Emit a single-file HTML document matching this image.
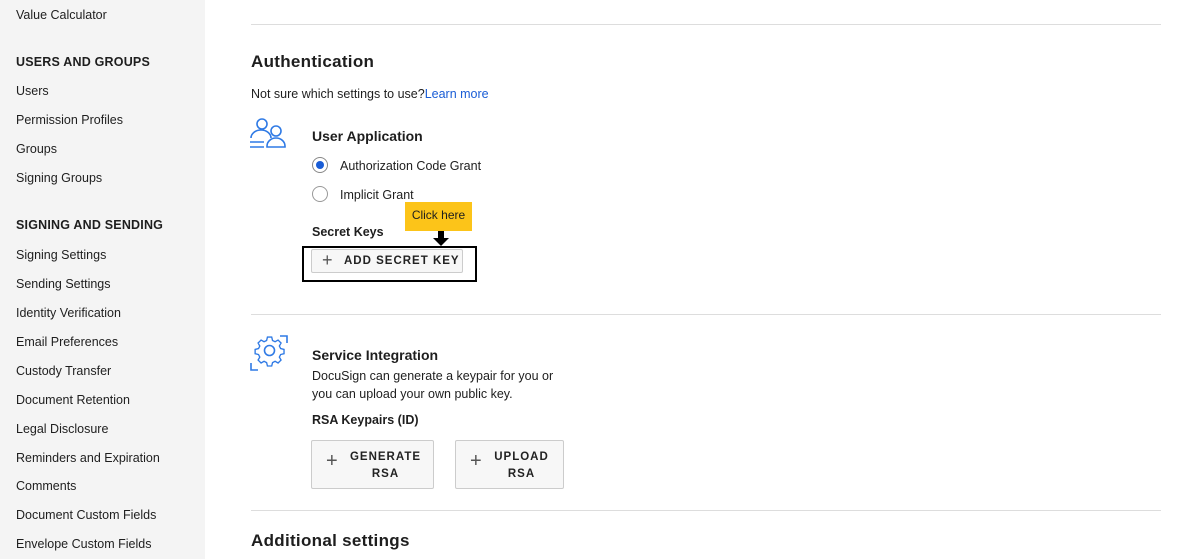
<!DOCTYPE html>
<html><head><style>
body{margin:0;width:1200px;height:559px;overflow:hidden;font-family:"Liberation Sans",sans-serif;color:#1e1e1e;background:#fff;position:relative}
.sb{position:absolute;left:0;top:0;width:205px;height:559px;background:#f4f4f4}
.t{position:absolute;white-space:nowrap}
.si{font-size:12.5px;left:16px}
.sh{font-size:12.5px;font-weight:bold;left:16px;letter-spacing:.2px}
.hr{position:absolute;left:251px;width:910px;height:1px;background:#ddd}
.btn{position:absolute;background:#f7f7f7;border:1px solid #ccc;border-radius:2px;font-size:11.5px;font-weight:bold;letter-spacing:1px;color:#222;box-sizing:border-box}
.pl{position:absolute;font-size:20px;font-weight:normal;color:#555;letter-spacing:0}
</style></head><body>
<div class="sb"></div>
<div class="t si" style="top:8px">Value Calculator</div>
<div class="t sh" style="top:55px">USERS AND GROUPS</div>
<div class="t si" style="top:84px">Users</div>
<div class="t si" style="top:113px">Permission Profiles</div>
<div class="t si" style="top:142px">Groups</div>
<div class="t si" style="top:171px">Signing Groups</div>
<div class="t sh" style="top:218px">SIGNING AND SENDING</div>
<div class="t si" style="top:248px">Signing Settings</div>
<div class="t si" style="top:277px">Sending Settings</div>
<div class="t si" style="top:306px">Identity Verification</div>
<div class="t si" style="top:335px">Email Preferences</div>
<div class="t si" style="top:364px">Custody Transfer</div>
<div class="t si" style="top:393px">Document Retention</div>
<div class="t si" style="top:422px">Legal Disclosure</div>
<div class="t si" style="top:451px">Reminders and Expiration</div>
<div class="t si" style="top:479px">Comments</div>
<div class="t si" style="top:508px">Document Custom Fields</div>
<div class="t si" style="top:537px">Envelope Custom Fields</div>

<div class="hr" style="top:24px"></div>
<div class="t" style="left:251px;top:52px;font-size:17px;font-weight:bold;letter-spacing:.3px">Authentication</div>
<div class="t" style="left:251px;top:87px;font-size:12.5px">Not sure which settings to use?<span style="color:#1a5dd6">Learn more</span></div>
<svg class="t" style="left:248px;top:117px" width="42" height="34" viewBox="0 0 42 34" fill="none" stroke="#2f7ae5" stroke-width="1.6">
<circle cx="14" cy="7" r="5"/><path d="M3 21a10 8 0 0 1 20 0"/><circle cx="28" cy="14" r="5"/><path d="M19 30v-1a9 8 0 0 1 18 0v1z"/><path d="M2 25h14M2 30h14"/></svg>
<div class="t" style="left:312px;top:128px;font-size:14px;font-weight:bold">User Application</div>
<div class="t" style="left:312px;top:157px;width:16px;height:16px;border:1px solid #888;border-radius:50%;box-sizing:border-box"><div style="position:absolute;left:3px;top:3px;width:8px;height:8px;border-radius:50%;background:#1a5dd6"></div></div>
<div class="t" style="left:340px;top:159px;font-size:12.5px">Authorization Code Grant</div>
<div class="t" style="left:312px;top:186px;width:16px;height:16px;border:1px solid #999;border-radius:50%;box-sizing:border-box"></div>
<div class="t" style="left:340px;top:188px;font-size:12.5px">Implicit Grant</div>
<div class="t" style="left:312px;top:225px;font-size:12.5px;font-weight:bold">Secret Keys</div>
<div class="t" style="left:405px;top:202px;width:67px;height:29px;background:#fcc419;font-size:12px;line-height:26px;text-align:center">Click here</div>
<div class="t" style="left:438px;top:231px;width:6px;height:7px;background:#000"></div>
<div class="t" style="left:433px;top:238px;width:0;height:0;border-left:8px solid transparent;border-right:8px solid transparent;border-top:8px solid #000"></div>
<div class="btn" style="left:311px;top:249px;width:152px;height:24px;line-height:23px;padding-left:32px">ADD SECRET KEY<span class="pl" style="left:10px;top:-1px;font-size:18px">+</span></div>
<div class="t" style="left:302px;top:246px;width:171px;height:32px;border:2px solid #000"></div>

<div class="hr" style="top:314px"></div>
<svg class="t" style="left:250px;top:335px" width="40" height="36" viewBox="0 0 40 36" fill="none" stroke="#2f7ae5" stroke-width="1.6">
<path d="M30 1h7v7M1 28v7h7"/>
<path d="M17 6h5l1 4 3 1.5 3.5-2 3.5 3.5-2 3.5 1.5 3 4 1v5l-4 1-1.5 3 2 3.5-3.5 3.5-3.5-2-3 1.5-1 4h-5l-1-4-3-1.5-3.5 2-3.5-3.5 2-3.5-1.5-3-4-1v-5l4-1 1.5-3-2-3.5 3.5-3.5 3.5 2 3-1.5z" transform="translate(3 -3) scale(.85)"/>
<circle cx="19.5" cy="15.5" r="5"/></svg>
<div class="t" style="left:312px;top:347px;font-size:14px;font-weight:bold">Service Integration</div>
<div class="t" style="left:312px;top:367px;font-size:12.5px;line-height:18px">DocuSign can generate a keypair for you or<br>you can upload your own public key.</div>
<div class="t" style="left:312px;top:413px;font-size:12.5px;font-weight:bold">RSA Keypairs (ID)</div>
<div class="btn" style="left:311px;top:440px;width:123px;height:49px;line-height:17px;padding:8px 0 0 26px;text-align:center">GENERATE<br>RSA<span class="pl" style="left:14px;top:12px">+</span></div>
<div class="btn" style="left:455px;top:440px;width:109px;height:49px;line-height:17px;padding:8px 0 0 24px;text-align:center">UPLOAD<br>RSA<span class="pl" style="left:14px;top:12px">+</span></div>

<div class="hr" style="top:510px"></div>
<div class="t" style="left:251px;top:531px;font-size:17px;font-weight:bold;letter-spacing:.3px">Additional settings</div>
</body></html>
